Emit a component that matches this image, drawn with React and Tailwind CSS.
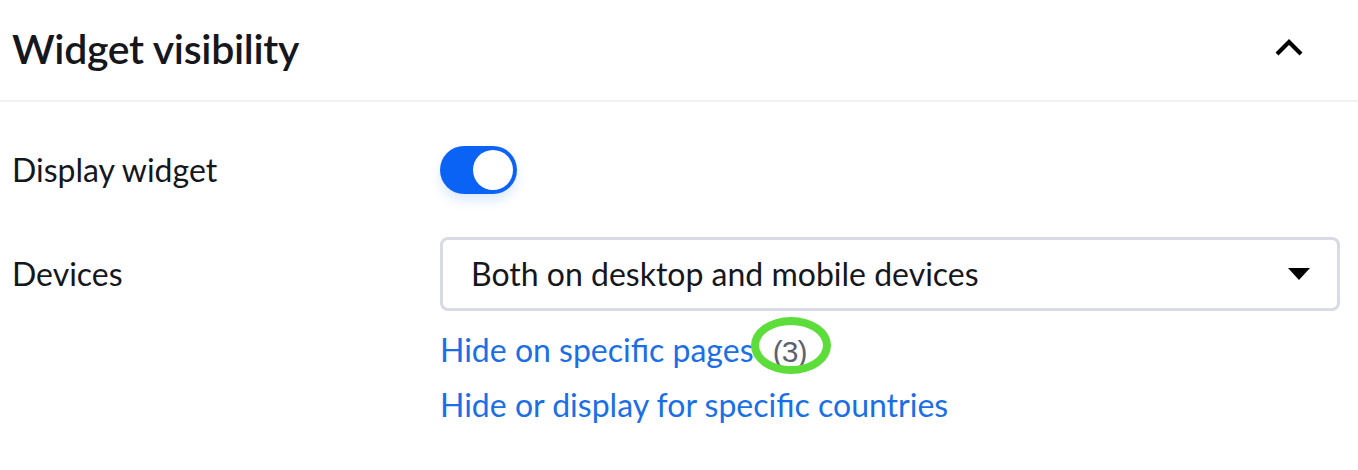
export default function App() {
  const font = { fontFamily: 'Lato, "Noto Sans", sans-serif' };
  return (
    <div className="w-[1358px] h-[470px] bg-white overflow-hidden text-[#15171c]" style={font}>
      <div className="h-[102px] flex items-center justify-between pl-[12px] pr-[54px] border-b-2 border-[#f1f1f3]">
        <h1 className="text-[41px] font-semibold tracking-[-0.3px] leading-none -mt-[4px]">Widget visibility</h1>
        <svg width="30" height="20" viewBox="0 0 30 20" className="-mt-[4px]">
          <path d="M3 16 L15 4 L27 16" fill="none" stroke="#000" strokeWidth="4.2" strokeLinecap="butt" strokeLinejoin="miter" />
        </svg>
      </div>
      <div className="pt-[44px] pl-[12px] pr-[18px]">
        <div className="flex items-center h-[48px]">
          <div className="w-[428px] text-[32px] leading-none">Display widget</div>
          <div className="relative w-[77px] h-[48px] rounded-full bg-[#0b63f6] shadow-[0_6px_12px_rgba(11,99,246,0.15)]">
            <div className="absolute right-[4px] top-[4px] w-[40px] h-[40px] rounded-full bg-white"></div>
          </div>
        </div>
        <div className="flex items-center mt-[43px]">
          <div className="w-[428px] text-[32px] leading-none">Devices</div>
          <div className="flex-1 h-[74px] border-[3px] border-[#d8dbe3] rounded-[8px] flex items-center justify-between pl-[28px] pr-[27px]">
            <span className="text-[32px] leading-none">Both on desktop and mobile devices</span>
            <svg width="22" height="12" viewBox="0 0 22 12">
              <path d="M0 0 L22 0 L11 12 Z" fill="#000" />
            </svg>
          </div>
        </div>
        <div className="pl-[428px] mt-[12px] text-[32px] leading-[53px] text-[#1a6fe6]">
          <div>
            Hide on specific pages{' '}
            <span className="relative ml-[11px] text-[#5d6170] tracking-[-1px]" style={{ fontFamily: '"Liberation Sans", Arial, sans-serif', fontSize: '30px' }}>
              (3)
              <span className="absolute left-[-22px] top-[-18px] w-[80px] h-[57px] rounded-[50%] border-[8px] border-[#5ddd3a]"></span>
            </span>
          </div>
          <div>Hide or display for specific countries</div>
        </div>
      </div>
    </div>
  );
}
